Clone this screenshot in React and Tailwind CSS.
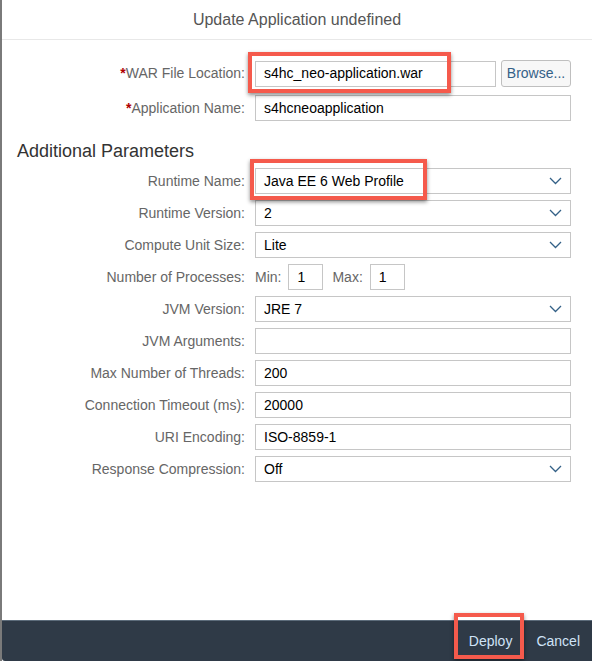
import React from 'react';

const Chevron = () => (
  <svg width="13" height="8" viewBox="0 0 13 8" className="shrink-0">
    <path d="M1 1l5.5 5.5L12 1" fill="none" stroke="#346187" strokeWidth="1.3" />
  </svg>
);

const Label = ({ children, required }) => (
  <div className="w-[243px] shrink-0 text-right text-[14px] text-[#666]">
    {required && <span className="text-[#b00000] font-bold">*</span>}
    {children}
  </div>
);

const Field = ({ value, select, className = '' }) => (
  <div className={`h-[26px] flex items-center justify-between border border-[#c6c6c6] bg-white pl-[8px] pr-[8px] text-[14px] text-black ${className}`}>
    <span>{value}</span>
    {select && <Chevron />}
  </div>
);

const Row = ({ label, required, children, className = '' }) => (
  <div className={`flex items-center ${className}`}>
    <Label required={required}>{label}</Label>
    <div className="ml-[10px] flex-1 flex items-center">{children}</div>
  </div>
);

// red annotation frame laid over a field
const Highlight = ({ className }) => (
  <div className={`absolute border-[4px] border-[#f55a4c] shadow-[0_2px_4px_rgba(0,0,0,0.45)] pointer-events-none ${className}`} />
);

const params = [
  { label: 'Runtime Version:', value: '2', select: true },
  { label: 'Compute Unit Size:', value: 'Lite', select: true },
];

const params2 = [
  { label: 'JVM Version:', value: 'JRE 7', select: true },
  { label: 'JVM Arguments:', value: '' },
  { label: 'Max Number of Threads:', value: '200' },
  { label: 'Connection Timeout (ms):', value: '20000' },
  { label: 'URI Encoding:', value: 'ISO-8859-1' },
  { label: 'Response Compression:', value: 'Off', select: true },
];

export default function App() {
  return (
    <div className="w-[592px] h-[661px] flex flex-col bg-white border-l-[2px] border-[#7a7a7a] font-['Liberation_Sans',Arial,sans-serif]">
      {/* Header */}
      <div className="h-[40px] shrink-0 flex items-center justify-center border-b border-[#e8e8e8] text-[16px] text-[#555]">
        Update Application undefined
      </div>

      {/* Body */}
      <div className="flex-1 pr-[21px] pt-[20px]">
        <Row label="WAR File Location:" required className="mb-[8px]">
          <div className="relative">
            <Field value="s4hc_neo-application.war" className="w-[241px]" />
            <Highlight className="left-[-7px] top-[-9px] w-[203px] h-[41px]" />
          </div>
          <button className="ml-[5px] flex-1 h-[27px] rounded-[3px] border border-[#bfbfbf] bg-[#f7f7f7] text-[14px] text-[#346187]">
            Browse...
          </button>
        </Row>
        <Row label="Application Name:" required>
          <Field value="s4hcneoapplication" className="flex-1" />
        </Row>

        <div className="mt-[18px] mb-[5px] pl-[15px] text-[18px] leading-[24px] text-[#333]">Additional Parameters</div>

        <div className="flex flex-col gap-[6px]">
          <Row label="Runtime Name:">
            <div className="relative flex-1">
              <Field value="Java EE 6 Web Profile" select />
              <Highlight className="left-[-5px] top-[-9px] w-[177px] h-[41px]" />
            </div>
          </Row>
          {params.map((p) => (
            <Row key={p.label} label={p.label}>
              <Field value={p.value} select={p.select} className="flex-1" />
            </Row>
          ))}
          <Row label="Number of Processes:">
            <span className="text-[14px] text-[#666] mr-[7px]">Min:</span>
            <Field value="1" className="w-[35px]" />
            <span className="text-[14px] text-[#666] ml-[9px] mr-[7px]">Max:</span>
            <Field value="1" className="w-[35px]" />
          </Row>
          {params2.map((p) => (
            <Row key={p.label} label={p.label}>
              <Field value={p.value} select={p.select} className="flex-1" />
            </Row>
          ))}
        </div>
      </div>

      {/* Footer */}
      <div className="h-[41px] shrink-0 flex items-center justify-end border-t border-[#5c6b7a] bg-[#2f3a47] pr-[12px] rounded-bl-[3px]">
        <div className="relative pl-[21px] pr-[18px] text-[14px] text-[#cfe3f7]">
          Deploy
          <Highlight className="left-[6px] top-[-18px] w-[70px] h-[46px]" />
        </div>
        <div className="ml-[6px] text-[14px] text-[#cfe3f7]">Cancel</div>
      </div>
    </div>
  );
}
